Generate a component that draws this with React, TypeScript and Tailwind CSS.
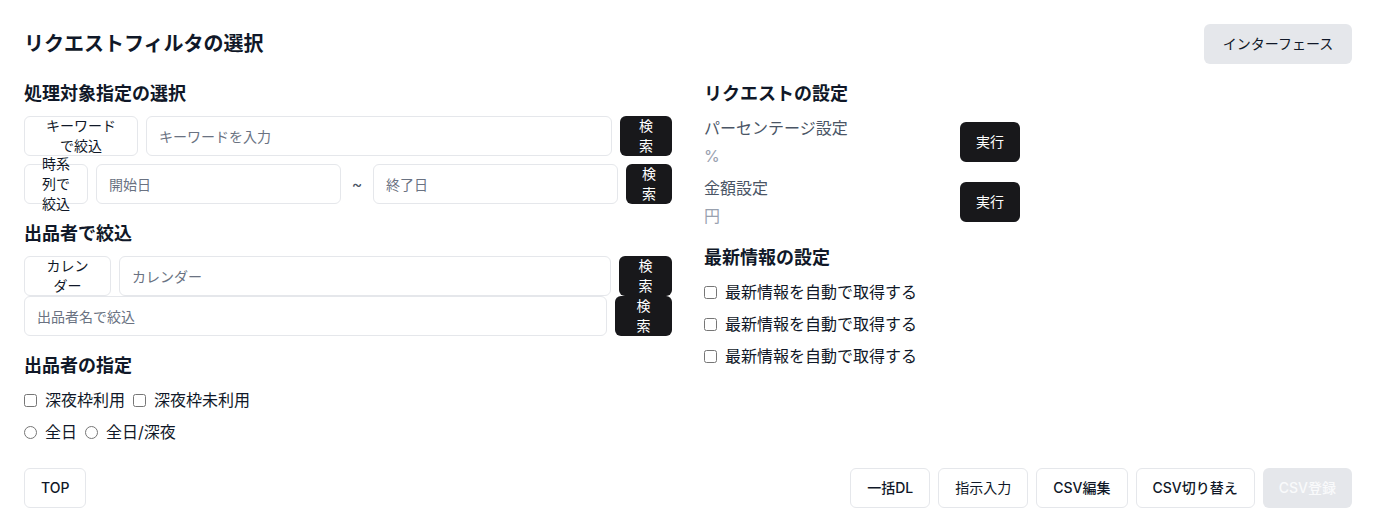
import React from "react";

const font = { fontFamily: 'Inter, "Noto Sans CJK JP", sans-serif' };

function OutlineBtn({ w, children }: { w: string; children: React.ReactNode }) {
  return (
    <button
      className={`${w} h-10 shrink-0 flex items-center justify-center px-4 text-sm leading-5 text-gray-900 bg-white border border-gray-200 rounded-md`}
    >
      <span className="block">{children}</span>
    </button>
  );
}

function SearchBtn({ w }: { w: string }) {
  return (
    <button
      className={`${w} h-10 shrink-0 flex items-center justify-center px-4 text-sm leading-5 text-white bg-[#18181b] rounded-md`}
    >
      <span className="block">検索</span>
    </button>
  );
}

function Input({ placeholder }: { placeholder: string }) {
  return (
    <input
      className="flex-1 min-w-0 h-10 px-3 text-sm border border-gray-200 rounded-md placeholder:text-gray-500 outline-none"
      placeholder={placeholder}
    />
  );
}

function Check({ label, type = "checkbox" }: { label: string; type?: string }) {
  return (
    <label className="inline-flex items-center gap-2 text-base leading-6 text-gray-900">
      <input type={type} name={type === "radio" ? "r" : undefined} className="w-[13px] h-[13px] m-0" />
      <span>{label}</span>
    </label>
  );
}

function Heading({ children }: { children: React.ReactNode }) {
  return <h2 className="text-lg leading-7 font-bold text-gray-900 mb-2">{children}</h2>;
}

export default function App() {
  return (
    <div className="w-[1376px] h-[532px] bg-white px-6 pt-6 text-gray-900" style={font}>
      <div className="flex items-center justify-between h-10">
        <h1 className="text-xl font-bold">リクエストフィルタの選択</h1>
        <button className="h-10 px-4 w-[148px] text-sm bg-gray-200 rounded-md text-gray-900">
          インターフェース
        </button>
      </div>

      <div className="grid grid-cols-2 gap-8 mt-4">
        <div className="flex flex-col">
          <Heading>処理対象指定の選択</Heading>
          <div className="flex flex-col gap-2">
            <div className="flex gap-2">
              <OutlineBtn w="w-[114px]">キーワードで絞込</OutlineBtn>
              <Input placeholder="キーワードを入力" />
              <SearchBtn w="w-[52px]" />
            </div>
            <div className="flex gap-2 items-center">
              <OutlineBtn w="w-16">時系列で絞込</OutlineBtn>
              <Input placeholder="開始日" />
              <span className="w-[16px] text-center text-base font-normal text-gray-600">~</span>
              <Input placeholder="終了日" />
              <SearchBtn w="w-[46px]" />
            </div>
          </div>

          <div className="mt-4">
            <Heading>出品者で絞込</Heading>
            <div className="flex flex-col">
              <div className="flex gap-2">
                <OutlineBtn w="w-[87px]">カレンダー</OutlineBtn>
                <Input placeholder="カレンダー" />
                <SearchBtn w="w-[53px]" />
              </div>
              <div className="flex gap-2">
                <Input placeholder="出品者名で絞込" />
                <SearchBtn w="w-[57px]" />
              </div>
            </div>
          </div>

          <div className="mt-4">
            <Heading>出品者の指定</Heading>
            <div className="flex flex-col gap-2">
              <div className="flex gap-2">
                <Check label="深夜枠利用" />
                <Check label="深夜枠未利用" />
              </div>
              <div className="flex gap-2">
                <Check label="全日" type="radio" />
                <Check label="全日/深夜" type="radio" />
              </div>
            </div>
          </div>
        </div>

        <div className="flex flex-col">
          <Heading>リクエストの設定</Heading>
          <div className="flex flex-col gap-2">
            <div className="flex items-center gap-2">
              <div className="w-[248px] flex flex-col gap-1">
                <span className="text-base leading-6 text-gray-600">パーセンテージ設定</span>
                <span className="text-base leading-6 text-gray-400">%</span>
              </div>
              <button className="w-[60px] h-10 text-sm text-white bg-[#18181b] rounded-md">実行</button>
            </div>
            <div className="flex items-center gap-2">
              <div className="w-[248px] flex flex-col gap-1">
                <span className="text-base leading-6 text-gray-600">金額設定</span>
                <span className="text-base leading-6 text-gray-400">円</span>
              </div>
              <button className="w-[60px] h-10 text-sm text-white bg-[#18181b] rounded-md">実行</button>
            </div>
          </div>

          <div className="mt-4">
            <Heading>最新情報の設定</Heading>
            <div className="flex flex-col gap-2">
              <Check label="最新情報を自動で取得する" />
              <Check label="最新情報を自動で取得する" />
              <Check label="最新情報を自動で取得する" />
            </div>
          </div>
        </div>
      </div>

      <div className="flex items-center justify-between mt-6">
        <button className="h-10 px-4 text-sm font-medium border border-gray-200 rounded-md bg-white">TOP</button>
        <div className="flex gap-2">
          <button className="h-10 px-4 text-sm font-medium border border-gray-200 rounded-md bg-white">一括DL</button>
          <button className="h-10 px-4 text-sm border border-gray-200 rounded-md bg-white">指示入力</button>
          <button className="h-10 px-4 text-sm font-medium border border-gray-200 rounded-md bg-white">CSV編集</button>
          <button className="h-10 px-4 text-sm font-medium border border-gray-200 rounded-md bg-white">CSV切り替え</button>
          <button className="h-10 px-4 text-sm font-medium rounded-md bg-gray-200 text-gray-50" disabled>CSV登録</button>
        </div>
      </div>
    </div>
  );
}
